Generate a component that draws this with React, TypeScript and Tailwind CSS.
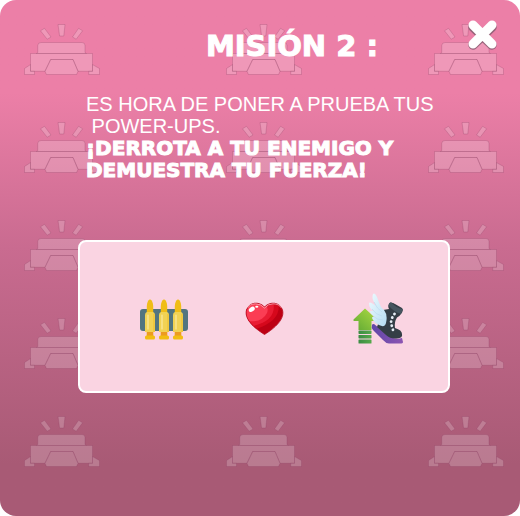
import React from "react";

function Siren() {
  return (
    <svg
      viewBox="0 0 76 51"
      className="h-[51px] w-[76px] shrink-0 fill-white/20 stroke-[#8c3c5f]/25"
      strokeWidth="1"
      strokeLinejoin="round"
    >
      <path d="M34 .5H41L39.8 12H35.6Z" />
      <path d="M16.5 6.8 20.5 4.3 27 13 23.2 15.2Z" />
      <path d="M54.6 4.3 58.6 6.8 52.2 15.2 48.5 13Z" />
      <path d="M13.7 28.5V21.5Q14 18.5 17 18.5H58Q61 18.5 61 21.5V28.5L62.5 29.5H12.3Z" />
      <path d="M6.5 29.5H68.5V47.3H54L49 35.5H26.7L21 47.3H6.5Z" />
      <path d="M26.7 35.5H49L54 47.2 52.6 50.5H22.4L21 47.2Z" />
      <path d="M.5 44.5 6.5 40.6V47.3H10.5V50.5H.5Z" />
      <path d="M75.5 44.5 68.5 40.6V47.3H64.7V50.5H75.5Z" />
    </svg>
  );
}

function Bullets() {
  return (
    <svg viewBox="0 0 52 52" className="size-[52px]" role="img" aria-label="Balas">
      <rect x="2" y="16" width="48" height="22" rx="3" fill="#52757f" />
      {[12, 26, 40].map((x) => (
        <g key={x} transform={`translate(${x} 0)`}>
          <path d="M-3.2 20V13Q-3 8 0 6.2Q3 8 3.2 13V20Z" fill="#f0bd17" />
          <path d="M-5 22Q-5 19.5-3 19H3Q5 19.5 5 22V39H-5Z" fill="#f1d254" />
          <path d="M-2 22V36" stroke="#faeaa2" strokeWidth="1.2" strokeLinecap="round" />
          <path d="M4 21V39" stroke="#efc63a" strokeWidth="1.6" />
          <rect x="-3.3" y="39" width="6.6" height="4" fill="#ed9b20" />
          <rect x="-5" y="42.5" width="10" height="4" rx="1.5" fill="#f2bd12" />
        </g>
      ))}
    </svg>
  );
}

function Heart() {
  return (
    <svg viewBox="0 0 52 52" className="size-[52px]" role="img" aria-label="Corazón">
      <defs>
        <clipPath id="heart-shape">
          <path d="M19.5 14C14 8 4 9 1.5 17C-1 26 9 35 19.5 41.5C30 35 40 26 37.5 17C35 9 25 8 19.5 14Z" />
        </clipPath>
      </defs>
      <g clipPath="url(#heart-shape)">
        <rect width="40" height="44" fill="#bd0013" />
        <path d="M0 8H33Q38 27 11 36L4 34Z" fill="#d6081c" />
        <path d="M0 8H28Q33 27 8 33L2 30Z" fill="#e91c33" />
        <path d="M0 8H20Q24 15 22 20Q17 30 2 28Z" fill="#fb3d54" />
        <path d="M22 16Q24 11 29 11Q34 11 37 17V10H24Z" fill="#e0162c" />
      </g>
      <path
        d="M19.5 14C14 8 4 9 1.5 17C-1 26 9 35 19.5 41.5C30 35 40 26 37.5 17C35 9 25 8 19.5 14Z"
        fill="none"
        stroke="#b50a20"
        strokeWidth=".8"
      />
      <path d="M2.5 15Q5 10.8 10.5 10.8Q16 10.8 19.5 15Q23 10.8 28 10.8Q34 10.8 36.5 15" fill="none" stroke="#fbc4cb" strokeWidth=".7" />
      <ellipse cx="6.8" cy="16.3" rx="3.3" ry="2.2" fill="#fff" transform="rotate(-35 6.8 16.3)" />
      <ellipse cx="11.8" cy="13.8" rx="1.6" ry="1" fill="#fff" />
    </svg>
  );
}

function WingedBoot() {
  return (
    <svg viewBox="0 0 52 52" className="size-[52px]" role="img" aria-label="Bota alada">
      <defs>
        <linearGradient id="arrow-fill" x1="1" y1="0" x2="0" y2="1">
          <stop stopColor="#b0dc43" />
          <stop offset="1" stopColor="#5fa834" />
        </linearGradient>
        <linearGradient id="stripe-fill">
          <stop stopColor="#3b8b43" />
          <stop offset="1" stopColor="#56a94b" />
        </linearGradient>
        <linearGradient id="wing-fill" x1="0" y1="0" x2="1" y2="1">
          <stop stopColor="#effbff" />
          <stop offset="1" stopColor="#b5dcf2" />
        </linearGradient>
        <linearGradient id="sole-fill">
          <stop stopColor="#6047a8" />
          <stop offset="1" stopColor="#8d55b2" />
        </linearGradient>
      </defs>
      <path d="M13 15.5 25 26.5Q25 28 24 28H19.5V37H6.5V28H2Q1 27.5 1.5 26.5Z" fill="url(#arrow-fill)" />
      <g fill="url(#stripe-fill)">
        <rect x="6.5" y="37.5" width="13" height="3.4" rx=".6" />
        <rect x="6.5" y="42" width="13" height="3.4" rx=".6" />
        <rect x="6.5" y="46.5" width="13" height="4" rx=".6" />
      </g>
      <path d="M20 32Q20 31 22 31L37 43Q43 47 50 45L51 49Q51 50.5 48 50.5H37Q34 50.5 31 47L21 37Q19 35 20 32Z" fill="url(#sole-fill)" />
      <path d="M31 17 37 16Q35 12 38 10Q40 9 43 11L50 15Q52 17 49 21Q47 24 45 24.5Q42 29 43 35Q50 37 50 41Q51 45 45 45.5Q38 46 34 42L25 34Z" fill="#343e46" />
      <path d="M37 13Q42 19 49 21L51 16Q45 16 39 9Q36 10 37 13Z" fill="#465660" />
      <path d="M21 1Q20 4 21 7L24 13Q18 8 17 10Q17 16 22 18Q18 17 18 19Q20 23 24 24Q20 23 20 25Q22 30 27 32Q33 35 34 30Q36 22 32 17L29 14Q27 10 25 4Q23-1 21 1Z" fill="url(#wing-fill)" />
      <path d="M22 9Q25 16 30 19M20 16Q24 22 30 23M21 23Q25 27 31 27" fill="none" stroke="#b7d9ee" strokeWidth=".6" />
      <path d="M42.5 21 40 25 39 29 39.8 33 41 37" fill="none" stroke="#e5edf5" strokeWidth="2.8" strokeLinecap="round" strokeDasharray="0.1 4.1" />
    </svg>
  );
}

export default function App() {
  return (
    <main className="grid overflow-hidden rounded-[16px] bg-linear-to-b from-[#ec7fa7] from-18% via-[#c96b90] via-48% to-[#a85a75] to-90% font-['DejaVu_Sans',sans-serif] text-white">
      <div aria-hidden="true" className="col-start-1 row-start-1 flex flex-col gap-[47px] pt-6 pb-[49px]">
        {[0, 1, 2, 3, 4].map((row) => (
          <div key={row} className="flex justify-between pr-4 pl-6">
            <Siren />
            <Siren />
            <Siren />
          </div>
        ))}
      </div>

      <section className="z-10 col-start-1 row-start-1">
        <header className="flex items-start pt-4 pr-5 pl-[120px]">
          <h1 className="flex-1 pt-3 text-center text-[29px] leading-9 font-bold [-webkit-text-stroke:1px_white]">
            MISIÓN 2 :
          </h1>
          <button type="button" aria-label="Cerrar" className="cursor-pointer">
            <svg viewBox="0 0 36 36" className="size-9" strokeLinecap="round" fill="none">
              <path d="M9 11 28 29M28 11 9 29" stroke="#98647b" strokeWidth="9.5" />
              <path d="M9 9 28 28M28 9 9 28" stroke="#fff" strokeWidth="9" />
            </svg>
          </button>
        </header>

        <div className="mt-[29px] pr-10 pl-[86px] text-[20px] leading-[22px]">
          <p className="font-['Liberation_Sans',sans-serif]">
            ES HORA DE PONER A PRUEBA TUS
            <br />
            &nbsp;POWER-UPS.
          </p>
          <p className="font-bold [-webkit-text-stroke:1px_white]">
            ¡DERROTA A TU ENEMIGO Y
            <br />
            DEMUESTRA TU FUERZA!
          </p>
        </div>

        <div className="mt-[59px] mr-[70px] ml-[78px] flex justify-between rounded-lg border-2 border-white bg-[#fad4e2] pt-[51px] pr-11 pb-[46px] pl-[58px]">
          <Bullets />
          <Heart />
          <WingedBoot />
        </div>
      </section>
    </main>
  );
}
